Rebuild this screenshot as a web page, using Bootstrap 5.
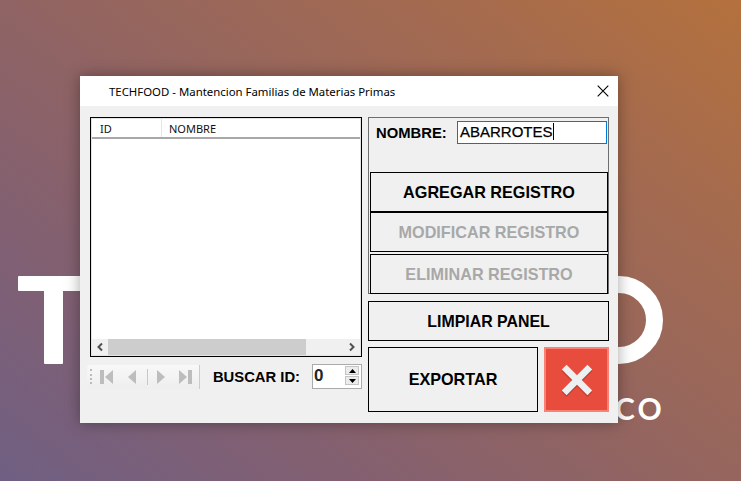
<!DOCTYPE html>
<html lang="es"><head><meta charset="utf-8"><title>TECHFOOD</title>
<link href="https://cdn.jsdelivr.net/npm/bootstrap@5.3.0/dist/css/bootstrap.min.css" rel="stylesheet">
<style>
html,body{height:100%;margin:0}
body{background:#876070}
.desk{position:relative;width:741px;height:481px;overflow:hidden;background:linear-gradient(38deg,#705f83 0%,#84606f 28%,#94655f 52%,#a36a50 76%,#b4713d 100%);font-family:"Liberation Sans",Arial,sans-serif}
.lg-bar{position:absolute;left:18px;top:276px;width:80px;height:15px;background:#fff;border-radius:1px}
.lg-stem{position:absolute;left:44px;top:276px;width:19px;height:88px;background:#fff;border-radius:1px}
.lg-ring{position:absolute;left:575px;top:276px;width:88px;height:88px;border:17px solid #fff;border-radius:50%}
.lg-text{position:absolute;left:615px;top:391px;font:700 30px/34px Lato,sans-serif;letter-spacing:3px;color:#fff}
.win{position:absolute;left:80px;top:76px;width:538px;height:347px;background:#f0f0f0;box-shadow:0 0 14px rgba(0,0,0,.35)}
.ttl{height:30px;background:#fff;padding-left:29px;font:11.4px/29px "Noto Sans",sans-serif;color:#000}
.cls{margin-right:9px}
.pane{padding:11px 9px 0 10px;gap:6px}
.left{width:272px}
.right{width:241px}
.grid{height:240px;border:1px solid #000;background:#fff;padding:1px;box-shadow:inset 0 0 0 1px #e4e4e4}
.ghead{height:20px;border-bottom:2px solid #a8a8a8;font:11px/19px "Noto Sans",sans-serif;color:#111}
.gh1{width:70px;padding-left:8px;border-right:1px solid #e5e5e5}
.gh2{padding-left:7px}
.sbar{height:16px;background:#f0f0f0}
.sarr{width:16px}
.sthumb{width:198px;background:#cdcdcd}
.tools{margin-top:7px;height:25px}
.tstrip{width:113px;height:24px;margin-left:-3px;background:linear-gradient(#f8f8f8,#eee);border-right:1px solid #ccc;border-radius:3px 0 0 0;padding-left:3px}
.tgrip{width:2px;height:15px;border-left:2px dotted #bbb;margin-right:8px}
.ti-a{margin-right:15px}
.ti-b{margin-right:11px}
.ti-c{margin:0 14px 0 9px}
.tsep{width:1px;height:16px;background:#c8c8c8}
.lbl{font-weight:700;font-size:14.8px;color:#000;white-space:nowrap}
.blbl{margin-left:13px;margin-top:1px}
.spin{width:50px;height:25px;margin-left:12px;background:#fff;border:1px solid #aaa;padding:1px 2px 1px 0}
.spin-v{font:700 17px/20px "Liberation Sans",sans-serif;padding-left:1px}
.spin-b{width:14px}
.spin-b span{height:9px;margin-bottom:1px;background:#ececec;border:1px solid #c4c4c4}
.gbox{height:177px;border:1px solid #6e6e6e;padding:3px 0 0 1px}
.nrow{height:24px;margin-bottom:27px}
.nlbl{padding-left:6px;width:87px;margin-top:1px}
.ntxt{width:150px;height:23px;background:#fff;border:1px solid #0078d7;font-size:15px;line-height:19px;padding:0 2px;color:#000;-webkit-text-stroke:.25px #000}
.caret-bar{display:inline-block;width:1px;height:17px;background:#000;vertical-align:-3px}
.wbtn{display:flex;align-items:center;justify-content:center;background:#f0f0f0;border:1px solid #000;border-radius:0;font-weight:700;font-size:16.2px;color:#000;padding:0}
.off{color:#a8a8a8}
.gb{width:238px;height:40px}
.gb3{margin-top:2px}
.limp{width:241px;height:40px;margin-top:7px;padding-top:1px;font-size:15.9px}
.brow{margin-top:6px;gap:6px}
.expo{width:170px;height:65px}
.redb{width:65px;height:65px;background:#e74c3c;border:2px solid #fb8177}
.redb svg{display:block}
</style></head>
<body>
<div class="desk">
  <div class="lg-bar"></div><div class="lg-stem"></div><div class="lg-ring"></div>
  <div class="lg-text">CO</div>
  <div class="win">
    <div class="ttl d-flex align-items-center justify-content-between">
      <span>TECHFOOD - Mantencion Familias de Materias Primas</span>
      <svg class="cls" width="12" height="12" viewBox="0 0 12 12"><path d="M.7.7l10.6 10.6M11.3.7L.7 11.3" stroke="#000" stroke-width="1.1" fill="none"/></svg>
    </div>
    <div class="pane d-flex">
      <div class="left">
        <div class="grid d-flex flex-column">
          <div class="ghead d-flex"><div class="gh1">ID</div><div class="gh2">NOMBRE</div></div>
          <div class="flex-grow-1"></div>
          <div class="sbar d-flex">
            <div class="sarr d-flex align-items-center justify-content-center"><svg width="8" height="10" viewBox="0 0 8 10"><path d="M6 1.5L2.5 5 6 8.5" stroke="#505050" stroke-width="2" fill="none"/></svg></div>
            <div class="sthumb"></div>
            <div class="flex-grow-1"></div>
            <div class="sarr d-flex align-items-center justify-content-center"><svg width="8" height="10" viewBox="0 0 8 10"><path d="M2 1.5L5.5 5 2 8.5" stroke="#505050" stroke-width="2" fill="none"/></svg></div>
          </div>
        </div>
        <div class="tools d-flex align-items-center">
          <div class="tstrip d-flex align-items-center">
            <div class="tgrip"></div>
            <svg width="13" height="14" viewBox="0 0 13 14" class="ti-a"><path d="M0 0h4v14H0zM13 0v14L5 7z" fill="#bdbdbd"/></svg>
            <svg width="8" height="14" viewBox="0 0 8 14" class="ti-b"><path d="M8 0v14L0 7z" fill="#bdbdbd"/></svg>
            <div class="tsep"></div>
            <svg width="8" height="14" viewBox="0 0 8 14" class="ti-c"><path d="M0 0v14l8-7z" fill="#bdbdbd"/></svg>
            <svg width="13" height="14" viewBox="0 0 13 14"><path d="M0 0v14l8-7zM9 0h4v14H9z" fill="#bdbdbd"/></svg>
          </div>
          <div class="lbl blbl">BUSCAR ID:</div>
          <div class="spin d-flex justify-content-between">
            <div class="spin-v">0</div>
            <div class="spin-b d-flex flex-column">
              <span class="d-flex align-items-center justify-content-center"><svg width="7" height="4" viewBox="0 0 7 4"><path d="M3.5 0L7 4H0z" fill="#000"/></svg></span>
              <span class="d-flex align-items-center justify-content-center"><svg width="7" height="4" viewBox="0 0 7 4"><path d="M0 0h7L3.5 4z" fill="#000"/></svg></span>
            </div>
          </div>
        </div>
      </div>
      <div class="right">
        <div class="gbox">
          <div class="nrow d-flex">
            <div class="lbl nlbl">NOMBRE:</div>
            <div class="ntxt">ABARROTES<span class="caret-bar"></span></div>
          </div>
          <button type="button" class="btn wbtn gb">AGREGAR REGISTRO</button>
          <button type="button" class="btn wbtn gb off">MODIFICAR REGISTRO</button>
          <button type="button" class="btn wbtn gb gb3 off">ELIMINAR REGISTRO</button>
        </div>
        <button type="button" class="btn wbtn limp">LIMPIAR PANEL</button>
        <div class="brow d-flex">
          <button type="button" class="btn wbtn expo">EXPORTAR</button>
          <button type="button" class="btn wbtn redb" aria-label="Cerrar"><svg width="38" height="38" viewBox="0 0 40 40"><path d="M4 9l5-5 11 11L31 4l5 5-11 11 11 11-5 5-11-11L9 36l-5-5 11-11z" fill="#b93a2e" transform="translate(0 1.5)"/><path d="M4 9l5-5 11 11L31 4l5 5-11 11 11 11-5 5-11-11L9 36l-5-5 11-11z" fill="#ecf0f1"/></svg></button>
        </div>
      </div>
    </div>
  </div>
</div>
</body></html>
